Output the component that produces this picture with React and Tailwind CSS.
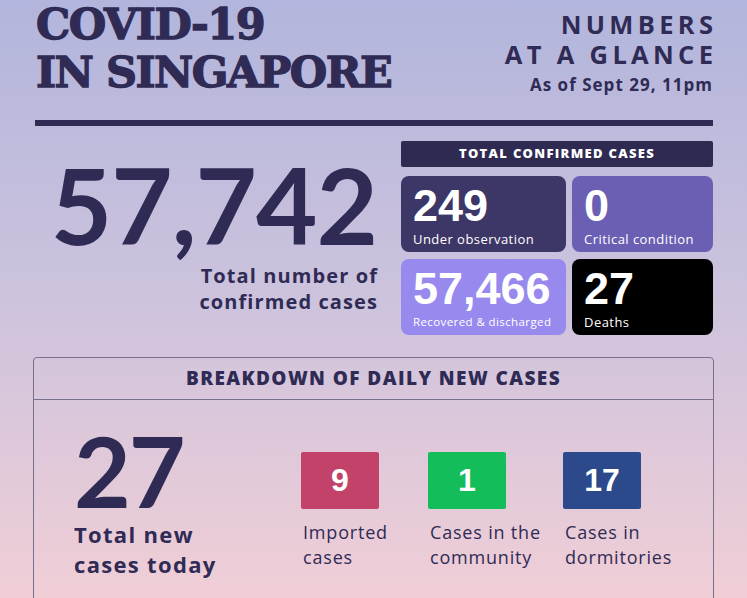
import React from 'react';

const body = { fontFamily: '"Open Sans", "Noto Sans", sans-serif' };
const round = { fontFamily: 'Lato, "Noto Sans", sans-serif' };
const slab = { fontFamily: '"DejaVu Serif", "Liberation Serif", serif' };
const arial = { fontFamily: '"Liberation Sans", Arial, sans-serif' };

const stats = [
    { value: '249', label: 'Under observation', bg: 'bg-[#3d3767]', size: 'text-[13px]' },
    { value: '0', label: 'Critical condition', bg: 'bg-[#6b5fb4]', size: 'text-[13px]' },
    { value: '57,466', label: 'Recovered & discharged', bg: 'bg-[#9889ef]', size: 'text-[11.5px]' },
    { value: '27', label: 'Deaths', bg: 'bg-black', size: 'text-[13px]' },
];

const daily = [
    { value: '9', label: ['Imported', 'cases'], bg: 'bg-[#c2426a]', w: 'w-[127px]' },
    { value: '1', label: ['Cases in the', 'community'], bg: 'bg-[#12bd5a]', w: 'w-[135px]' },
    { value: '17', label: ['Cases in', 'dormitories'], bg: 'bg-[#2c4a8b]', w: 'w-[130px]' },
];

export default function App() {
    return (
        <div className="w-[747px] h-[598px] overflow-hidden bg-gradient-to-b from-[#b2b5dc] via-[#cdc3dd] to-[#f0ced6] text-[#2f2b55]" style={body}>
            {/* Header */}
            <div className="flex justify-between pl-[36px] pr-[34px]">
                <h1 className="text-[43px] leading-[48px] font-bold tracking-[-1.5px] [-webkit-text-stroke:1.3px_#2f2b55]" style={slab}>
                    COVID-19
                    <br />
                    IN SINGAPORE
                </h1>
                <div className="text-right pt-[9px]">
                    <p className="text-[25.5px] leading-[30px] font-bold tracking-[0.17em] mr-[-0.17em]">NUMBERS</p>
                    <p className="text-[25.5px] leading-[30px] font-bold tracking-[0.17em] mr-[-0.17em]">AT A GLANCE</p>
                    <p className="text-[17px] font-bold tracking-[0.06em] mt-[3px]">As of Sept 29, 11pm</p>
                </div>
            </div>

            <div className="ml-[35px] mt-[22px] w-[678px] h-[6px] bg-[#2f2b55]"></div>

            {/* Totals */}
            <div className="flex mt-[15px]">
                <div className="w-[377px] text-right">
                    <p className="text-[106px] leading-[100px] font-bold tracking-[-1px] mt-[13px]" style={round}>57,742</p>
                    <p className="text-[20px] leading-[26px] font-bold tracking-[0.055em] mt-[9px] mr-[-1px]">
                        Total number of
                        <br />
                        confirmed cases
                    </p>
                </div>
                <div className="ml-[24px] w-[312px]">
                    <div className="h-[26px] bg-[#2e2a52] rounded-[2px] flex items-center justify-center text-white text-[13px] font-extrabold tracking-[0.1em]">
                        TOTAL CONFIRMED CASES
                    </div>
                    <div className="grid grid-cols-[165px_141px] gap-x-[6px] gap-y-[7px] mt-[9px]">
                        {stats.map((s) => (
                            <div key={s.label} className={`${s.bg} h-[76px] rounded-[8px] px-[12px] pt-[9px] text-white`}>
                                <p className="text-[45px] leading-[42px] font-bold" style={arial}>{s.value}</p>
                                <p className={`${s.size} leading-[16px] tracking-[0.035em] mt-[4px]`}>{s.label}</p>
                            </div>
                        ))}
                    </div>
                </div>
            </div>

            {/* Breakdown */}
            <div className="ml-[33px] mt-[22px] w-[681px] h-[260px] border border-[#77718c] rounded-t-[4px]">
                <div className="h-[42px] border-b border-[#77718c] flex items-center justify-center text-[19px] font-extrabold tracking-[0.075em]">
                    BREAKDOWN OF DAILY NEW CASES
                </div>
                <div className="flex pl-[40px] pt-[25px]">
                    <div className="w-[227px]">
                        <p className="text-[98px] leading-[90px] font-bold tracking-[-2px]" style={round}>27</p>
                        <p className="text-[22px] leading-[30px] font-bold tracking-[0.06em] mt-[4px]">
                            Total new
                            <br />
                            cases today
                        </p>
                    </div>
                    <div className="flex pt-[27px]">
                        {daily.map((d) => (
                            <div key={d.value} className={d.w}>
                                <div className={`${d.bg} w-[78px] h-[57px] rounded-[2px] flex items-center justify-center text-white text-[32px] font-bold`} style={arial}>
                                    {d.value}
                                </div>
                                <p className="text-[18px] leading-[25px] tracking-[0.045em] mt-[11px] ml-[2px]">
                                    {d.label[0]}
                                    <br />
                                    {d.label[1]}
                                </p>
                            </div>
                        ))}
                    </div>
                </div>
            </div>
        </div>
    );
}
